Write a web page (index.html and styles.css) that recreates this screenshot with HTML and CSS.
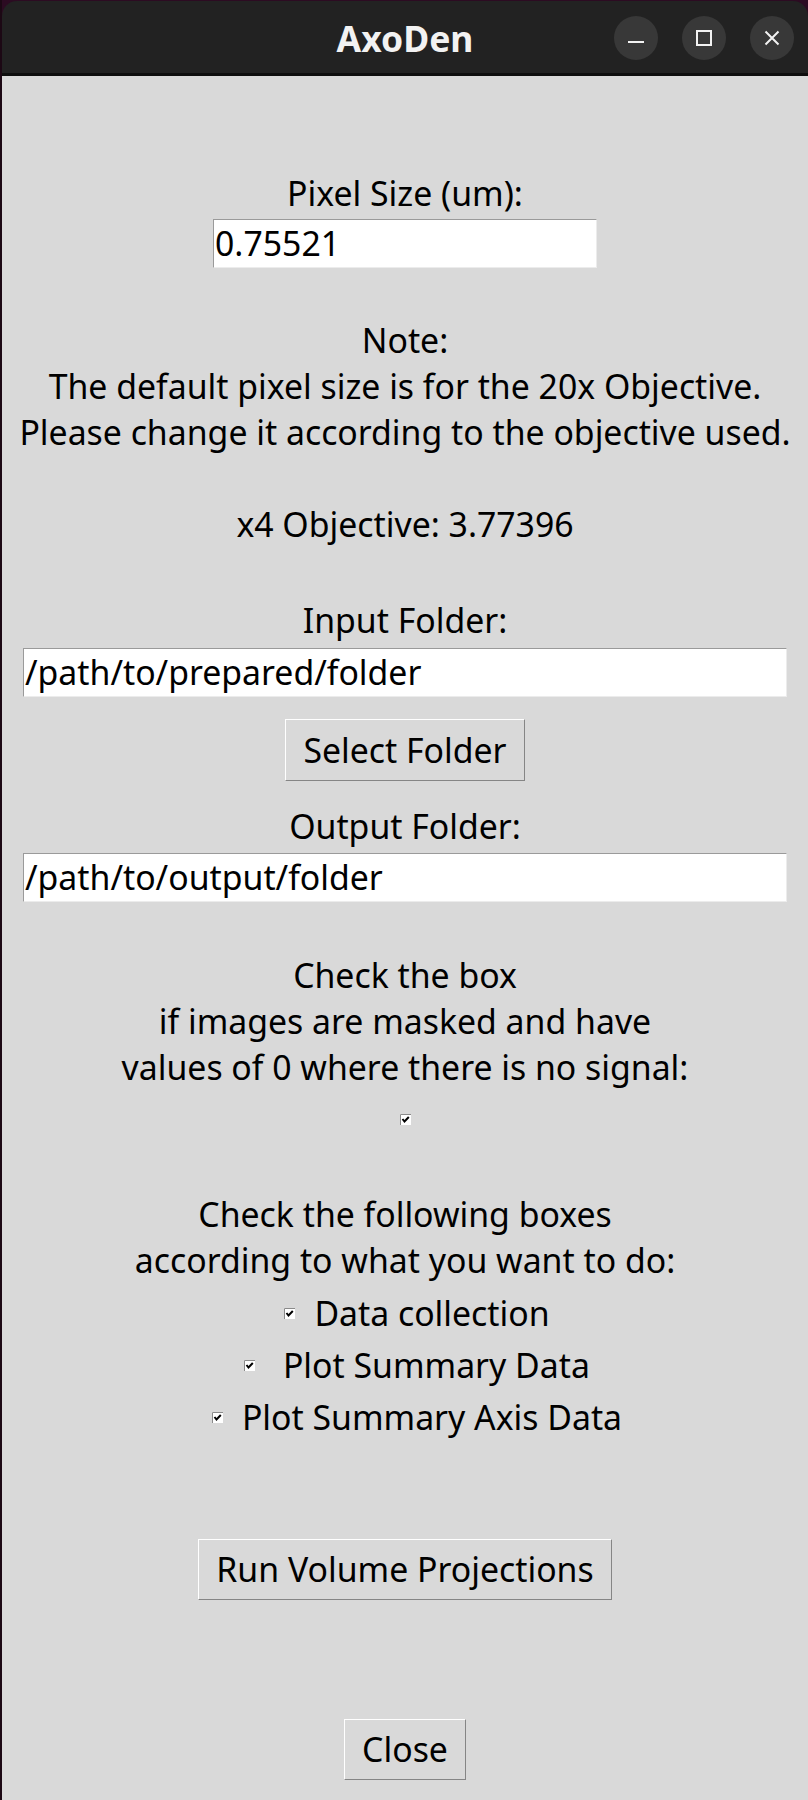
FILE: index.html
```html
<!DOCTYPE html>
<html lang="en">
<head>
<meta charset="utf-8">
<title>AxoDen</title>
<link rel="stylesheet" href="styles.css">
</head>
<body>
<div class="window">
  <header class="titlebar">
    <div class="spacer"></div>
    <span class="title">AxoDen</span>
    <div class="controls">
      <span class="ctl" aria-label="Minimize">
        <svg width="16" height="16" viewBox="0 0 16 16"><rect x="0" y="11" width="16" height="2" fill="#f2f2f2"/></svg>
      </span>
      <span class="ctl" aria-label="Maximize">
        <svg width="16" height="16" viewBox="0 0 16 16"><rect x="1" y="1" width="14" height="14" fill="none" stroke="#f2f2f2" stroke-width="2"/></svg>
      </span>
      <span class="ctl" aria-label="Close">
        <svg width="16" height="16" viewBox="0 0 16 16"><path d="M1.5 1.5 L14.5 14.5 M14.5 1.5 L1.5 14.5" stroke="#f2f2f2" stroke-width="2" fill="none"/></svg>
      </span>
    </div>
  </header>

  <main class="content">
    <div class="label l-pixel">Pixel Size (um):</div>
    <input class="entry entry-short" type="text" value="0.75521">

    <div class="label l-note">Note:<br>The default pixel size is for the 20x Objective.<br>Please change it according to the objective used.<br><br>x4 Objective: 3.77396</div>

    <div class="label l-input">Input Folder:</div>
    <input class="entry entry-wide e-input" type="text" value="/path/to/prepared/folder">
    <button class="btn btn-select" type="button">Select Folder</button>

    <div class="label l-output">Output Folder:</div>
    <input class="entry entry-wide e-output" type="text" value="/path/to/output/folder">

    <div class="label l-mask">Check the box<br>if images are masked and have<br>values of 0 where there is no signal:</div>
    <div class="check-single">
      <span class="box"><svg width="11" height="11" viewBox="0 0 11 11"><rect x="0" y="0" width="11" height="11" fill="#ffffff"/><path d="M0.5 11 V0.5 H11" stroke="#8a8a8a" fill="none"/><path d="M2.5 5 L4.5 7.5 L8.8 3" stroke="#000" stroke-width="2" fill="none"/></svg></span>
    </div>

    <div class="label l-tasks">Check the following boxes<br>according to what you want to do:</div>
    <div class="checks">
      <div class="check-row">
        <span class="box"><svg width="11" height="11" viewBox="0 0 11 11"><rect x="0" y="0" width="11" height="11" fill="#ffffff"/><path d="M0.5 11 V0.5 H11" stroke="#8a8a8a" fill="none"/><path d="M2.5 5 L4.5 7.5 L8.8 3" stroke="#000" stroke-width="2" fill="none"/></svg></span>
        <span class="check-text">Data collection</span>
      </div>
      <div class="check-row">
        <span class="box"><svg width="11" height="11" viewBox="0 0 11 11"><rect x="0" y="0" width="11" height="11" fill="#ffffff"/><path d="M0.5 11 V0.5 H11" stroke="#8a8a8a" fill="none"/><path d="M2.5 5 L4.5 7.5 L8.8 3" stroke="#000" stroke-width="2" fill="none"/></svg></span>
        <span class="check-text"> Plot Summary Data</span>
      </div>
      <div class="check-row">
        <span class="box"><svg width="11" height="11" viewBox="0 0 11 11"><rect x="0" y="0" width="11" height="11" fill="#ffffff"/><path d="M0.5 11 V0.5 H11" stroke="#8a8a8a" fill="none"/><path d="M2.5 5 L4.5 7.5 L8.8 3" stroke="#000" stroke-width="2" fill="none"/></svg></span>
        <span class="check-text">Plot Summary Axis Data</span>
      </div>
    </div>

    <button class="btn btn-run" type="button">Run Volume Projections</button>
    <button class="btn btn-close" type="button">Close</button>
  </main>
</div>
</body>
</html>
```

FILE: styles.css
```css
html, body {
  margin: 0;
  padding: 0;
}

body {
  background: #1c0814;
  width: 808px;
  height: 1800px;
  overflow: hidden;
}

.window {
  margin-left: 2px;
  padding-top: 1px;
  background: #2c0b22;
}

.titlebar {
  display: grid;
  grid-template-columns: 1fr auto 1fr;
  align-items: center;
  height: 72px;
  background: #222222;
  border-radius: 15px 15px 0 0;
  border-bottom: 3px solid #0e0e0e;
  color: #f2f2f2;
}

.title {
  font-family: "Noto Sans", "DejaVu Sans", sans-serif;
  font-weight: 700;
  font-size: 35.5px;
  line-height: 46px;
  padding-top: 2px;
}

.controls {
  display: flex;
  justify-content: flex-end;
  gap: 24px;
  padding-right: 14px;
  padding-top: 2px;
}

.ctl {
  width: 44px;
  height: 44px;
  border-radius: 50%;
  background: #383838;
  display: flex;
  align-items: center;
  justify-content: center;
}

.ctl svg {
  display: block;
}

.content {
  background: #d9d9d9;
  height: 1724px;
  display: flex;
  flex-direction: column;
  align-items: center;
  font-family: "Noto Sans", "Open Sans", sans-serif;
  font-size: 33.8px;
  line-height: 46px;
  color: #000;
}

.label {
  text-align: center;
  white-space: nowrap;
}

.entry {
  box-sizing: border-box;
  height: 49px;
  margin: 0;
  padding: 0 1px 1px 1px;
  border: 1px solid;
  border-color: #9a9a9a #ececec #ececec #9a9a9a;
  background: #ffffff;
  font-family: inherit;
  font-size: 33.8px;
  line-height: 46px;
  color: #000;
  outline: none;
}

.entry-short {
  width: 384px;
}

.entry-wide {
  width: 764px;
}

.btn {
  box-sizing: border-box;
  height: 61px;
  margin: 0;
  padding: 6px 17px 7px;
  border: 1px solid;
  border-color: #ffffff #858585 #858585 #ffffff;
  background: #d9d9d9;
  font-family: inherit;
  font-size: 33.8px;
  line-height: 46px;
  color: #000;
}

.l-pixel { margin-top: 94px; }
.entry-short { margin-top: 3px; }
.l-note { margin-top: 49px; }
.l-input { margin-top: 50px; }
.e-input { margin-top: 5px; }
.btn-select { margin-top: 22px; height: 62px; }
.l-output { margin-top: 22px; }
.e-output { margin-top: 4px; }
.l-mask { margin-top: 50px; }

.check-single {
  margin-top: 6px;
  height: 46px;
  display: flex;
  align-items: center;
  justify-content: center;
}

.box {
  width: 11px;
  height: 11px;
  display: block;
}

.box svg {
  display: block;
}

.l-tasks { margin-top: 49px; }

.checks {
  margin-top: 4px;
  display: flex;
  flex-direction: column;
  align-items: center;
}

.check-row {
  height: 52px;
  display: flex;
  align-items: center;
  gap: 19px;
  padding-left: 24px;
}

.check-text {
  white-space: pre;
  line-height: 46px;
}

.btn-run { margin-top: 96px; }
.btn-close { margin-top: 119px; }
```
